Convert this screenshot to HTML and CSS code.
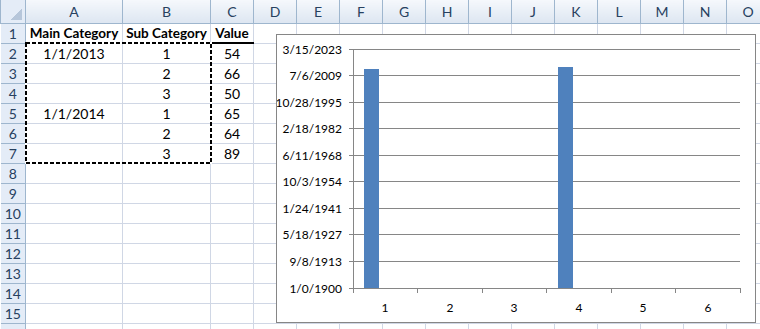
FILE: index.html
```html
<!DOCTYPE html>
<html lang="en">
<head>
    <meta charset="UTF-8">
    <title>Sheet1</title>
    <link rel="stylesheet" href="styles.css">
</head>
<body>
    <div class="sheet-wrap">
        <table class="sheet">
            <colgroup>
                <col class="w-head">
                <col class="w-a">
                <col class="w-b">
                <col class="w-c"><col class="w-c"><col class="w-c"><col class="w-c"><col class="w-c">
                <col class="w-c"><col class="w-c"><col class="w-c"><col class="w-c"><col class="w-c">
                <col class="w-c"><col class="w-c"><col class="w-c">
            </colgroup>
            <tr class="col-heads">
                <th class="corner"></th>
                <th>A</th><th>B</th><th>C</th><th>D</th><th>E</th><th>F</th><th>G</th>
                <th>H</th><th>I</th><th>J</th><th>K</th><th>L</th><th>M</th><th>N</th><th>O</th>
            </tr>
            <tr>
                <th class="row-head">1</th>
                <td class="title">Main Category</td><td class="title">Sub Category</td><td class="title">Value</td>
                <td></td><td></td><td></td><td></td><td></td><td></td><td></td><td></td><td></td><td></td><td></td><td></td>
            </tr>
            <tr>
                <th class="row-head">2</th>
                <td>1/1/2013</td><td>1</td><td>54</td>
                <td></td><td></td><td></td><td></td><td></td><td></td><td></td><td></td><td></td><td></td><td></td><td></td>
            </tr>
            <tr>
                <th class="row-head">3</th>
                <td></td><td>2</td><td>66</td>
                <td></td><td></td><td></td><td></td><td></td><td></td><td></td><td></td><td></td><td></td><td></td><td></td>
            </tr>
            <tr>
                <th class="row-head">4</th>
                <td></td><td>3</td><td>50</td>
                <td></td><td></td><td></td><td></td><td></td><td></td><td></td><td></td><td></td><td></td><td></td><td></td>
            </tr>
            <tr>
                <th class="row-head">5</th>
                <td>1/1/2014</td><td>1</td><td>65</td>
                <td></td><td></td><td></td><td></td><td></td><td></td><td></td><td></td><td></td><td></td><td></td><td></td>
            </tr>
            <tr>
                <th class="row-head">6</th>
                <td></td><td>2</td><td>64</td>
                <td></td><td></td><td></td><td></td><td></td><td></td><td></td><td></td><td></td><td></td><td></td><td></td>
            </tr>
            <tr>
                <th class="row-head">7</th>
                <td></td><td>3</td><td>89</td>
                <td></td><td></td><td></td><td></td><td></td><td></td><td></td><td></td><td></td><td></td><td></td><td></td>
            </tr>
            <tr><th class="row-head">8</th><td></td><td></td><td></td><td></td><td></td><td></td><td></td><td></td><td></td><td></td><td></td><td></td><td></td><td></td><td></td></tr>
            <tr><th class="row-head">9</th><td></td><td></td><td></td><td></td><td></td><td></td><td></td><td></td><td></td><td></td><td></td><td></td><td></td><td></td><td></td></tr>
            <tr><th class="row-head">10</th><td></td><td></td><td></td><td></td><td></td><td></td><td></td><td></td><td></td><td></td><td></td><td></td><td></td><td></td><td></td></tr>
            <tr><th class="row-head">11</th><td></td><td></td><td></td><td></td><td></td><td></td><td></td><td></td><td></td><td></td><td></td><td></td><td></td><td></td><td></td></tr>
            <tr><th class="row-head">12</th><td></td><td></td><td></td><td></td><td></td><td></td><td></td><td></td><td></td><td></td><td></td><td></td><td></td><td></td><td></td></tr>
            <tr><th class="row-head">13</th><td></td><td></td><td></td><td></td><td></td><td></td><td></td><td></td><td></td><td></td><td></td><td></td><td></td><td></td><td></td></tr>
            <tr><th class="row-head">14</th><td></td><td></td><td></td><td></td><td></td><td></td><td></td><td></td><td></td><td></td><td></td><td></td><td></td><td></td><td></td></tr>
            <tr><th class="row-head">15</th><td></td><td></td><td></td><td></td><td></td><td></td><td></td><td></td><td></td><td></td><td></td><td></td><td></td><td></td><td></td></tr>
            <tr class="last-row"><th class="row-head"></th><td></td><td></td><td></td><td></td><td></td><td></td><td></td><td></td><td></td><td></td><td></td><td></td><td></td><td></td><td></td></tr>
        </table>

        <!-- copy marquee around A2:B7 -->
        <svg class="marquee" width="188" height="124" viewBox="0 0 188 124">
            <rect x="1" y="1" width="185" height="120" fill="none" stroke="#fff" stroke-width="2"/>
            <rect x="1" y="1" width="185" height="120" fill="none" stroke="#000" stroke-width="2" stroke-dasharray="4 2"/>
        </svg>

        <!-- chart -->
        <div class="chart">
            <svg class="plot" width="478" height="287" viewBox="0 0 478 287">
                <g class="grid">
                    <line x1="72" y1="14.5" x2="463" y2="14.5"/>
                    <line x1="72" y1="40.5" x2="463" y2="40.5"/>
                    <line x1="72" y1="67.5" x2="463" y2="67.5"/>
                    <line x1="72" y1="93.5" x2="463" y2="93.5"/>
                    <line x1="72" y1="120.5" x2="463" y2="120.5"/>
                    <line x1="72" y1="146.5" x2="463" y2="146.5"/>
                    <line x1="72" y1="173.5" x2="463" y2="173.5"/>
                    <line x1="72" y1="199.5" x2="463" y2="199.5"/>
                    <line x1="72" y1="226.5" x2="463" y2="226.5"/>
                </g>
                <rect class="bar" x="87" y="34" width="15" height="219"/>
                <rect class="bar" x="281" y="32" width="15" height="221"/>
                <g class="grid">
                    <line x1="76.5" y1="14" x2="76.5" y2="258"/>
                    <line x1="72" y1="253.5" x2="463.5" y2="253.5"/>
                    <line x1="140.5" y1="253" x2="140.5" y2="258"/>
                    <line x1="205.5" y1="253" x2="205.5" y2="258"/>
                    <line x1="269.5" y1="253" x2="269.5" y2="258"/>
                    <line x1="334.5" y1="253" x2="334.5" y2="258"/>
                    <line x1="398.5" y1="253" x2="398.5" y2="258"/>
                    <line x1="463.5" y1="253" x2="463.5" y2="258"/>
                </g>
                <g class="y-labels">
                    <text x="65" y="19">3/15/2023</text>
                    <text x="65" y="45">7/6/2009</text>
                    <text x="65" y="72">10/28/1995</text>
                    <text x="65" y="98">2/18/1982</text>
                    <text x="65" y="125">6/11/1968</text>
                    <text x="65" y="151">10/3/1954</text>
                    <text x="65" y="178">1/24/1941</text>
                    <text x="65" y="204">5/18/1927</text>
                    <text x="65" y="231">9/8/1913</text>
                    <text x="65" y="258">1/0/1900</text>
                </g>
                <g class="x-labels">
                    <text x="108" y="277">1</text>
                    <text x="173" y="277">2</text>
                    <text x="237" y="277">3</text>
                    <text x="302" y="277">4</text>
                    <text x="366" y="277">5</text>
                    <text x="431" y="277">6</text>
                </g>
            </svg>
        </div>
    </div>
</body>
</html>
```

FILE: styles.css
```css
body {
    margin: 0;
    background-color: #fff;
    font-family: Lato, "Liberation Sans", sans-serif;
    overflow: hidden;
}

.sheet-wrap {
    position: relative;
    width: 760px;
    height: 329px;
    overflow: hidden;
}

.sheet {
    border-collapse: collapse;
    table-layout: fixed;
    width: 769px;
}

.w-head { width: 25px; }
.w-a { width: 97px; }
.w-b { width: 88px; }
.w-c { width: 43px; }

.sheet tr {
    height: 20px;
}

.sheet tr.col-heads {
    height: 23px;
}

.sheet td {
    border: 1px solid #d0d7e5;
    padding: 0;
    font-size: 14px;
    color: #000;
    text-align: center;
    white-space: nowrap;
}

.sheet td.title {
    font-weight: bold;
    font-size: 13.5px;
    border-bottom: 2px solid #000;
}

.sheet th {
    border: 1px solid #9eb6ce;
    padding: 0;
    font-size: 14px;
    font-weight: normal;
    color: #27415f;
    text-align: center;
}

.col-heads th {
    border-top: none;
    background: linear-gradient(#f5f8fc, #dde6f1);
}

.row-head {
    border-left: none !important;
    background-color: #e4ecf7;
}

.corner {
    background: #e4ecf7 linear-gradient(135deg, transparent 50%, #b6c6da 50%) no-repeat right 3px bottom 3px / 11px 11px !important;
}

.marquee {
    position: absolute;
    left: 25px;
    top: 42px;
}

.chart {
    position: absolute;
    left: 276px;
    top: 34px;
    width: 478px;
    height: 287px;
    border: 1px solid #868686;
    background-color: #fff;
}

.plot {
    display: block;
}

.grid line {
    stroke: #868686;
    stroke-width: 1;
}

.bar {
    fill: #4f81bd;
}

.plot text {
    font-family: Lato, "Liberation Sans", sans-serif;
    font-size: 12px;
    fill: #000;
}

.y-labels text {
    text-anchor: end;
}

.x-labels text {
    text-anchor: middle;
}
```
